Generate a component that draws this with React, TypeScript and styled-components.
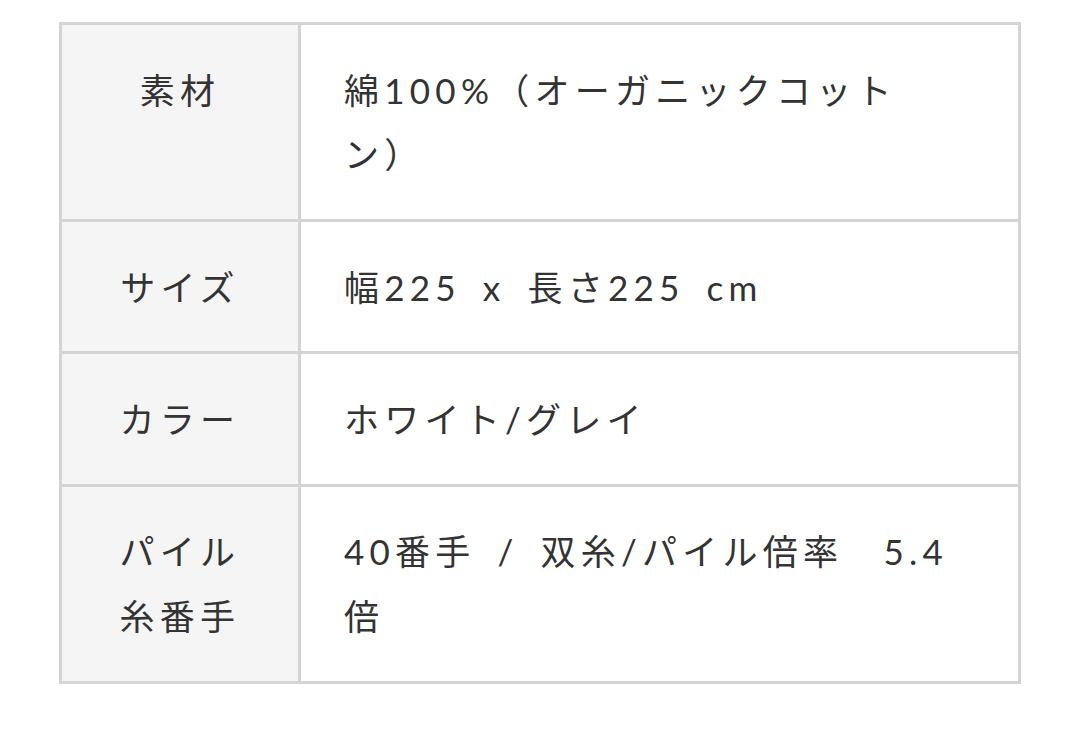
import React from 'react';
import styled, { createGlobalStyle } from 'styled-components';

const GlobalStyle = createGlobalStyle`
  html, body {
    margin: 0;
    padding: 0;
    background: #ffffff;
  }
  body {
    font-family: "Lato", "Noto Sans CJK JP", "Noto Sans", sans-serif;
    color: #333333;
  }
`;

const Page = styled.div`
  padding: 22px 59px 0 59px;
`;

const Table = styled.table`
  width: 962px;
  border-collapse: collapse;
  border: 3px solid #d4d4d4;
  table-layout: fixed;
`;

const LabelCol = styled.col`
  width: 239px;
`;

const Row = styled.tr`
  border-bottom: 3px solid #d4d4d4;
`;

const Label = styled.th`
  background: #f5f5f5;
  border-right: 3px solid #d4d4d4;
  padding: 32.5px 48px 32px;
  font-weight: 400;
  font-size: 35px;
  line-height: 1.85;
  letter-spacing: 0.15em;
  text-align: center;
  vertical-align: top;
  color: #333333;
`;

const Value = styled.td`
  padding: 32.5px 65px 32px 43px;
  font-size: 35px;
  line-height: 1.85;
  letter-spacing: 0.15em;
  word-spacing: 0.22em;
  vertical-align: top;
  color: #333333;
`;

const specs = [
  { label: '素材', value: '綿100%（オーガニックコットン）' },
  { label: 'サイズ', value: '幅225 x 長さ225 cm' },
  { label: 'カラー', value: 'ホワイト/グレイ' },
  { label: 'パイル糸番手', value: '40番手 / 双糸/パイル倍率　5.4倍' },
];

const App = () => {
  return (
    <Page>
      <GlobalStyle />
      <Table>
        <colgroup>
          <LabelCol />
          <col />
        </colgroup>
        <tbody>
          {specs.map((s, i) => (
            <Row key={i}>
              <Label>{s.label}</Label>
              <Value>{s.value}</Value>
            </Row>
          ))}
        </tbody>
      </Table>
    </Page>
  );
};

export default App;
